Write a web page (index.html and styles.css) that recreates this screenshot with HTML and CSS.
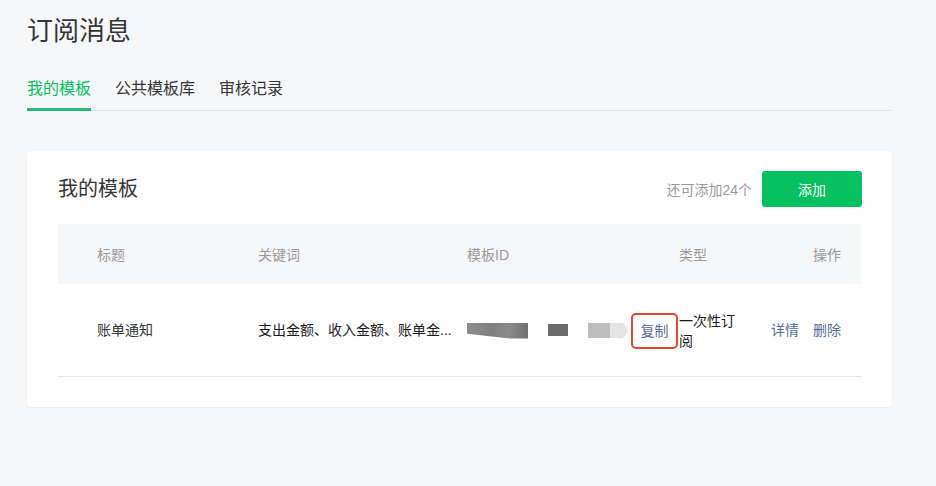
FILE: index.html
```html
<!DOCTYPE html>
<html lang="zh-CN">
<head>
<meta charset="utf-8">
<title>订阅消息</title>
<link rel="stylesheet" href="styles.css">
</head>
<body>
<div class="page">
  <h1 class="page-title">订阅消息</h1>
  <nav class="tabs">
    <a class="tab tab-active">我的模板</a>
    <a class="tab">公共模板库</a>
    <a class="tab">审核记录</a>
  </nav>
  <section class="card">
    <div class="card-head">
      <h2 class="card-title">我的模板</h2>
      <div class="card-actions">
        <span class="quota">还可添加24个</span>
        <button class="btn-primary">添加</button>
      </div>
    </div>
    <div class="table">
      <div class="row row-head">
        <div class="cell">标题</div>
        <div class="cell">关键词</div>
        <div class="cell">模板ID</div>
        <div class="cell">类型</div>
        <div class="cell cell-right">操作</div>
      </div>
      <div class="row row-body">
        <div class="cell cell-title">账单通知</div>
        <div class="cell"><span class="keywords">支出金额、收入金额、账单金...</span></div>
        <div class="cell cell-id">
          <span class="blur blur-a"></span>
          <span class="blur blur-b"></span>
          <span class="blur blur-c"><i></i></span>
          <a class="copy">复制</a>
        </div>
        <div class="cell cell-type">一次性订阅</div>
        <div class="cell cell-right ops">
          <a class="link">详情</a>
          <a class="link">删除</a>
        </div>
      </div>
    </div>
  </section>
</div>
</body>
</html>
```

FILE: styles.css
```css
* { box-sizing: border-box; }
html, body { margin: 0; padding: 0; }
body {
  background: #f6f7f9;
  font-family: "Liberation Sans", "Noto Sans CJK SC", sans-serif;
  color: #353535;
  width: 936px;
  height: 486px;
  overflow: hidden;
}
.page {
  padding: 13px 44px 0 27px;
}
.page-title {
  margin: 0;
  font-size: 26px;
  line-height: 36px;
  font-weight: 400;
  color: #353535;
}
.tabs {
  display: flex;
  gap: 24px;
  margin-top: 28px;
  border-bottom: 1px solid #e2e3e5;
}
.tab {
  font-size: 16px;
  line-height: 24px;
  padding-bottom: 7px;
  border-bottom: 3px solid transparent;
  margin-bottom: -1px;
  color: #353535;
}
.tab-active {
  color: #07c160;
  border-bottom-color: #2cb77a;
}
.card {
  margin-top: 40px;
  background: #fff;
  border-radius: 4px;
  box-shadow: 0 1px 2px rgba(0, 0, 0, 0.05);
  padding: 20px 31px 30px;
}
.card-head {
  display: flex;
  align-items: center;
  justify-content: space-between;
  height: 36px;
}
.card-title {
  margin: 0;
  font-size: 20px;
  line-height: 28px;
  font-weight: 400;
  color: #353535;
}
.card-actions {
  display: flex;
  align-items: center;
  gap: 10px;
  margin-right: -1px;
}
.quota {
  font-size: 14px;
  color: #9a9a9a;
}
.btn-primary {
  width: 100px;
  height: 36px;
  border: 0;
  border-radius: 3px;
  background: #07c160;
  color: #fff;
  font-family: inherit;
  font-size: 14px;
}
.table {
  margin-top: 17px;
}
.row {
  display: grid;
  grid-template-columns: 161px 209px 212px 64px 1fr;
  align-items: center;
  padding: 0 20px 0 39px;
  font-size: 14px;
}
.row-head {
  height: 60px;
  background: #f6f7f9;
  color: #9a9a9a;
}
.row-body {
  height: 93px;
  border-bottom: 1px solid #e6e6e6;
  line-height: 20px;
}
.cell-right { text-align: right; }
.cell-title { color: #353535; }
.keywords {
  display: block;
  white-space: nowrap;
  color: #1a1a1a;
}
.cell-id {
  display: flex;
  align-items: center;
}
.blur { display: block; }
.blur-a {
  width: 61px;
  height: 16px;
  margin-top: 1px;
  background: linear-gradient(90deg, #8e8e8e 0%, #7f7f7f 40%, #8a8a8a 70%, #6f6f6f 100%);
  clip-path: polygon(0 0, 100% 0, 100% 100%, 70% 100%, 0 70%);
}
.blur-b {
  width: 20px;
  height: 12px;
  margin-left: 20px;
  margin-top: -1px;
  background: #6b6b6b;
}
.blur-c {
  position: relative;
  width: 39px;
  height: 15px;
  margin-left: 20px;
  background: #bdbdbd;
  border-radius: 0 8px 8px 0;
}
.blur-c i {
  position: absolute;
  right: 0;
  top: 0;
  width: 17px;
  height: 15px;
  background: #e4e4e4;
  border-radius: 0 8px 8px 0;
}
.copy {
  display: block;
  margin-left: 4px;
  width: 47px;
  height: 36px;
  border: 2px solid #e5472f;
  border-radius: 5px;
  color: #576b95;
  text-align: center;
  line-height: 32px;
  margin-top: 1px;
}
.cell-type {
  color: #1a1a1a;
  padding-right: 6px;
  margin-top: 1px;
}
.ops {
  display: flex;
  justify-content: flex-end;
  gap: 14px;
}
.link { color: #576b95; }
```
